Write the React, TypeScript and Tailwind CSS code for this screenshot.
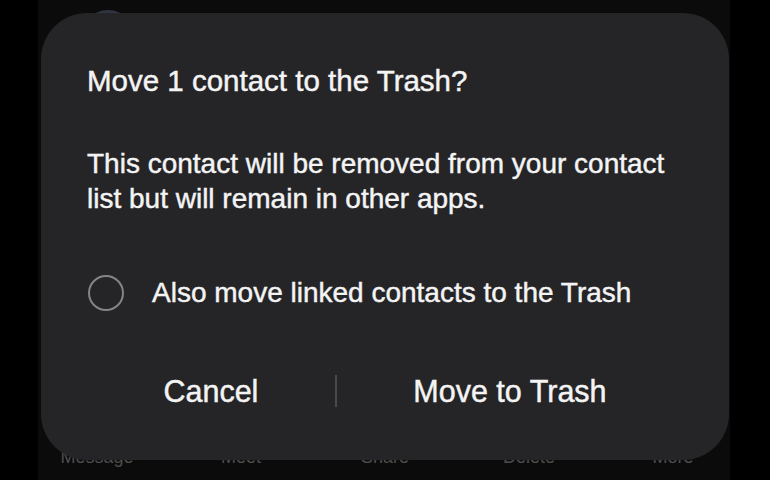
import React from 'react'

const actions = ['Message', 'Meet', 'Share', 'Delete', 'More']

export default function App() {
  return (
    <div className="relative w-[770px] h-[480px] overflow-hidden bg-black font-['Liberation_Sans',Arial,sans-serif]">
      {/* Contact screen behind the dialog */}
      <div className="ml-[38px] mr-[40px] h-full bg-[#0b0b0b] flex flex-col">
        <div className="mt-[10px] ml-[42px] w-[56px] h-[56px] rounded-full bg-[#2f3441]" />
        <div className="flex-1" />
        <div className="grid grid-cols-5 w-[720px] -ml-[13px] pb-[12px] text-[18px] leading-[22px] text-[#4e4e4e] text-center">
          {actions.map((a) => (
            <span key={a}>{a}</span>
          ))}
        </div>
      </div>

      {/* Dialog */}
      <div className="absolute left-[41px] top-[13px] w-[688px] h-[447px] rounded-[46px] bg-[#252527] px-[46px] pt-[50px] flex flex-col text-[#f4f4f4] [-webkit-text-stroke:0.45px_#f4f4f4]">
        <h2 className="text-[29.5px] leading-[35px]">Move 1 contact to the Trash?</h2>
        <p className="mt-[48px] text-[28px] leading-[35px]">
          This contact will be removed from your contact list but will remain in other apps.
        </p>
        <label className="mt-[59px] flex items-center gap-[28px] ml-[1px]">
          <span className="w-[36px] h-[36px] rounded-full border-[2.5px] border-[#858585] shrink-0" />
          <span className="text-[28px] leading-[36px]">Also move linked contacts to the Trash</span>
        </label>
        <div className="mt-[62px] flex items-center">
          <button className="grow text-[30.5px] leading-[36px] text-[#f4f4f4]">Cancel</button>
          <div className="w-[2px] h-[32px] bg-[#4a4a4c]" />
          <button className="grow text-[30.5px] leading-[36px] text-[#f4f4f4]">Move to Trash</button>
        </div>
      </div>
    </div>
  )
}
